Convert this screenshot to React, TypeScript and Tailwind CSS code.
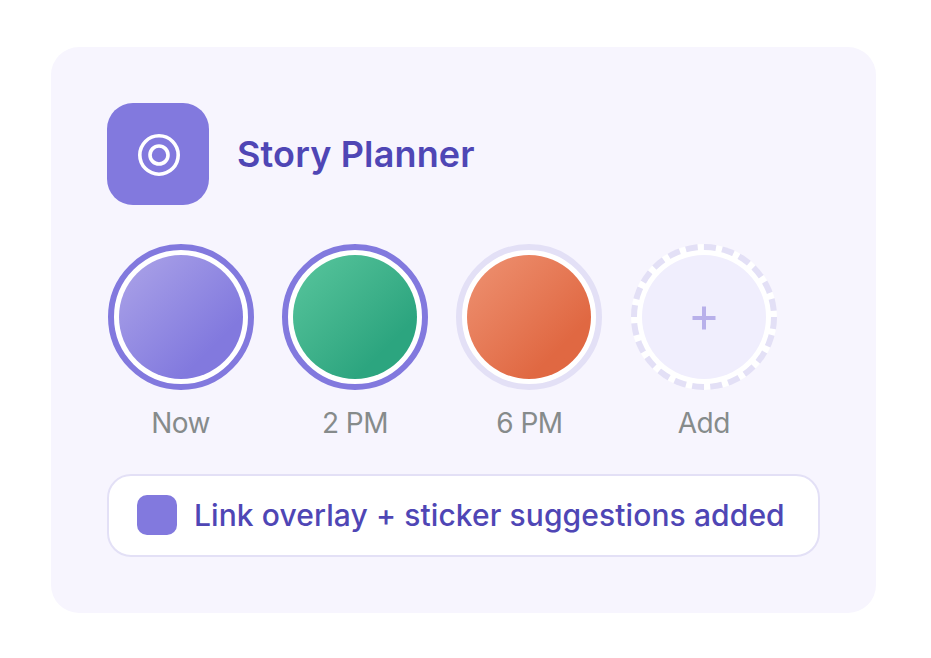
const stories = [
  { label: 'Now', ring: 'border-[#8279de]', fill: 'bg-gradient-to-br from-[#ada4e8] to-[#8279de] to-75%' },
  { label: '2 PM', ring: 'border-[#8279de]', fill: 'bg-gradient-to-br from-[#58c69d] to-[#2ca57f] to-75%' },
  { label: '6 PM', ring: 'border-[#e3e0f6]', fill: 'bg-gradient-to-br from-[#ee9272] to-[#e06842] to-75%' },
]

export default function App() {
  return (
    <div className="min-h-screen bg-white pl-[51px] pt-[47px] font-['Inter',sans-serif]">
      <div className="h-[566px] w-[825px] rounded-[28px] bg-[#f7f5fe] p-[56px]">
        <div className="flex items-center gap-[28px]">
          <div className="flex h-[102px] w-[102px] items-center justify-center rounded-[26px] bg-[#8279de]">
            <svg className="ml-[2px] mt-[2px]" width="42" height="42" viewBox="0 0 42 42" fill="none" stroke="white" strokeWidth="3.6">
              <circle cx="21" cy="21" r="19.2" />
              <circle cx="21" cy="21" r="9" />
            </svg>
          </div>
          <h1 className="text-[36px] font-semibold tracking-[0.15px] text-[#4f46b5]">Story Planner</h1>
        </div>

        <div className="mt-[39px] flex gap-[28.4px] pl-[0.6px]">
          {stories.map((story) => (
            <div key={story.label} className="flex w-[146px] flex-col items-center">
              <div className={`h-[146px] w-[146px] rounded-full border-[6px] bg-white p-[5px] ${story.ring}`}>
                <div className={`h-full w-full rounded-full ${story.fill}`} />
              </div>
              <span className="mt-[16px] text-[28px] leading-[34px] tracking-[-0.5px] text-[#868b8b]">{story.label}</span>
            </div>
          ))}
          <div className="flex w-[146px] flex-col items-center">
            <div className="h-[146px] w-[146px] rounded-full border-[6px] border-dashed border-[#e3e0f6] bg-white p-[5px]">
              <div className="flex h-full w-full items-center justify-center rounded-full bg-[#f0eefd] pt-[2px]">
                <svg width="24" height="24" viewBox="0 0 24 24" fill="none" stroke="#b8b0ea" strokeWidth="4">
                  <path d="M12 0.5v23M0.5 12h23" />
                </svg>
              </div>
            </div>
            <span className="mt-[16px] text-[28px] leading-[34px] tracking-[-0.5px] text-[#868b8b]">Add</span>
          </div>
        </div>

        <div className="mt-[34px] flex h-[83px] w-[713px] items-center gap-[17px] rounded-[24px] border-2 border-[#e3e0f6] bg-white pl-[28px]">
          <div className="mb-[2px] h-[40px] w-[40px] rounded-[10px] bg-[#8279de]" />
          <span className="text-[30px] font-medium tracking-[0.1px] text-[#4f46b5]">Link overlay + sticker suggestions added</span>
        </div>
      </div>
    </div>
  )
}
